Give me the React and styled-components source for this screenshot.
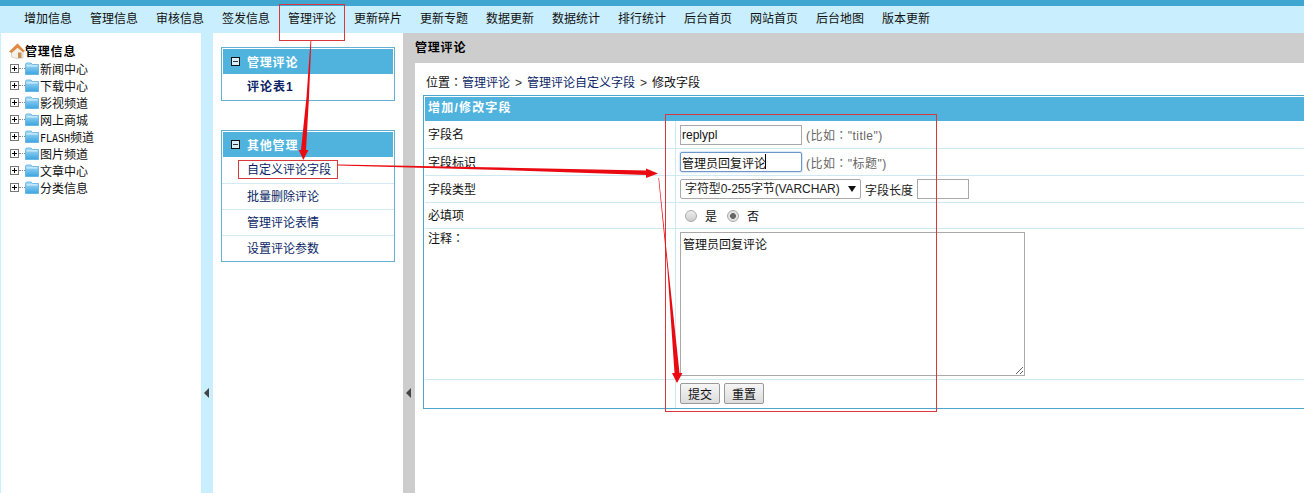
import styled, { createGlobalStyle } from "styled-components";

const FONT = `"Liberation Sans", "Noto Sans CJK SC", sans-serif`;

const navItems = ["增加信息", "管理信息", "审核信息", "签发信息", "管理评论", "更新碎片", "更新专题", "数据更新", "数据统计", "排行统计", "后台首页", "网站首页", "后台地图", "版本更新"];
const treeItems = ["新闻中心", "下载中心", "影视频道", "网上商城", "FLASH频道", "图片频道", "文章中心", "分类信息"];
const otherItems = ["自定义评论字段", "批量删除评论", "管理评论表情", "设置评论参数"];

const GlobalStyle = createGlobalStyle`
  html, body {
    margin: 0;
    padding: 0;
    height: 100%;
    overflow: hidden;
    background: #fff;
  }
  body {
    font-family: ${FONT};
    font-size: 12px;
    color: #111;
  }
`;

const Page = styled.div`
  position: relative;
  width: 1304px;
  height: 493px;
  overflow: hidden;
  display: flex;
  flex-direction: column;
`;

const TopStrip = styled.div`
  height: 6px;
  background: #3fa5d1;
`;

const Nav = styled.nav`
  height: 27px;
  padding-left: 15px;
  display: flex;
  align-items: center;
  background: #c9eefd;
`;

const NavItem = styled.a`
  width: 66px;
  text-align: center;
  font-size: 12px;
  line-height: 27px;
  color: #111;
`;

const Body = styled.div`
  flex: 1;
  display: flex;
  min-height: 0;
  background: #c9eefd;
`;

const Sidebar = styled.aside`
  width: 200px;
  margin-left: 1px;
  padding: 8px 0 0 8px;
  box-sizing: border-box;
  background: #fff;
`;

const Splitter = styled.div`
  width: 12px;
  flex: none;
  display: flex;
  align-items: flex-start;
  padding: 355px 0 0 3px;
  box-sizing: border-box;
  background: ${(p) => p.$bg};
  &::before {
    content: "";
    border-style: solid;
    border-width: 5px 5px 5px 0;
    border-color: transparent #444 transparent transparent;
  }
`;

const TreeRoot = styled.div`
  display: flex;
  align-items: center;
  height: 19px;
  font-weight: 700;
  font-size: 12px;
  letter-spacing: 0.8px;
  color: #000;
`;

const TreeList = styled.div`
  display: flex;
  flex-direction: column;
`;

const TreeRow = styled.div`
  display: flex;
  align-items: center;
  height: 17px;
  font-size: 12px;
  color: #111;
`;

const Plus = styled.span`
  position: relative;
  width: 7px;
  height: 7px;
  flex: none;
  margin-left: 1px;
  border: 1px solid #777;
  background: #fff;
  &::before {
    content: "";
    position: absolute;
    left: 1px;
    top: 3px;
    width: 5px;
    height: 1px;
    background: #000;
  }
  &::after {
    content: "";
    position: absolute;
    left: 3px;
    top: 1px;
    width: 1px;
    height: 5px;
    background: #000;
  }
`;

const Dots = styled.span`
  width: 6px;
  height: 0;
  flex: none;
  border-top: 1px dotted #888;
`;

const Mono = styled.span`
  font-family: "DejaVu Sans Mono", monospace;
  font-size: 10px;
`;

const Middle = styled.section`
  width: 190px;
  flex: none;
  padding: 14px 8px 0;
  box-sizing: border-box;
  background: #fff;
  display: flex;
  flex-direction: column;
  gap: 29px;
`;

const MenuBox = styled.div`
  border: 1px solid #62b0d2;
`;

const MenuHead = styled.div`
  height: 25px;
  margin: 1px 1px 0;
  padding-left: 8px;
  display: flex;
  align-items: center;
  gap: 7px;
  background: #4fb3de;
  color: #fff;
  font-weight: 700;
  font-size: 12px;
  letter-spacing: 0.8px;
`;

const MinusIcon = styled.span`
  position: relative;
  width: 7px;
  height: 7px;
  border: 1px solid #111;
  background: #d8eef8;
  &::after {
    content: "";
    position: absolute;
    left: 1px;
    top: 3px;
    width: 5px;
    height: 1px;
    background: #333;
  }
`;

const MenuRow = styled.a`
  display: block;
  height: 26px;
  line-height: 26px;
  padding-left: 25px;
  font-size: 12px;
  font-weight: ${(p) => (p.$bold ? 700 : 400)};
  letter-spacing: ${(p) => (p.$bold ? "1px" : "0")};
  color: #0b1f66;
  border-top: ${(p) => (p.$line ? "1px solid #d3eaf4" : "none")};
  box-sizing: border-box;
`;

const Main = styled.main`
  flex: 1;
  min-width: 0;
  margin-left: -12px;
  display: flex;
  flex-direction: column;
`;

const MainTitle = styled.div`
  height: 30px;
  line-height: 30px;
  padding-left: 12px;
  font-weight: 700;
  font-size: 12px;
  letter-spacing: 0.8px;
  color: #000;
  background: #cdcdcd;
`;

const Content = styled.div`
  flex: 1;
  margin-left: 12px;
  padding-left: 8px;
  background: #fff;
`;

const Crumb = styled.div`
  height: 32px;
  line-height: 38px;
  padding-left: 3px;
  font-size: 12px;
  color: #111;
  white-space: nowrap;
  a {
    color: #0b1f66;
  }
`;

const Sep = styled.span`
  margin: 0 5px;
  color: #333;
`;

// traditional-form colon sits in the middle of its cell, like the original
const Colon = styled.span`
  font-family: "Noto Sans CJK TC", sans-serif;
`;

const FormTable = styled.div`
  width: 1000px;
  border: 1px solid #4fa6cc;
  display: grid;
  grid-template-columns: 251px 1fr;
  padding: 1px 0 0 1px;
`;

const FormHead = styled.div`
  grid-column: 1 / -1;
  height: 24px;
  line-height: 23px;
  padding-left: 3px;
  background: #4fb3de;
  color: #fff;
  font-weight: 700;
  font-size: 12px;
  letter-spacing: 1.2px;
`;

const Label = styled.div`
  height: ${(p) => p.$h}px;
  padding: 0 0 ${(p) => (p.$top ? "0" : "2px")} 3px;
  box-sizing: border-box;
  display: flex;
  align-items: ${(p) => (p.$top ? "flex-start" : "center")};
  border-top: ${(p) => (p.$first ? "none" : "1px solid #cfe9f3")};
  border-right: 1px solid #cfe9f3;
  font-size: 12px;
  color: #111;
`;

const Field = styled.div`
  position: relative;
  height: ${(p) => p.$h}px;
  padding-left: 4px;
  box-sizing: border-box;
  display: flex;
  align-items: ${(p) => (p.$top ? "flex-start" : "center")};
  gap: 4px;
  border-top: ${(p) => (p.$first ? "none" : "1px solid #cfe9f3")};
  color: #555;
  font-size: 12px;
`;

const TextInput = styled.input`
  width: ${(p) => p.$w}px;
  height: 20px;
  box-sizing: border-box;
  padding: 0 1px;
  font-family: ${FONT};
  font-size: 12px;
  color: #111;
  background: #fff;
  outline: none;
  border-radius: ${(p) => (p.$focus ? "2px" : "0")};
  border: 1px solid ${(p) => (p.$focus ? "#6d97c9" : "#a9a9a9")};
  box-shadow: ${(p) => (p.$focus ? "0 0 2px #7ea8d8" : "none")};
`;

const Hint = styled.span`
  color: ${(p) => p.$color || "#666"};
  letter-spacing: ${(p) => (p.$color ? "0" : "0.45px")};
  white-space: nowrap;
`;

const Caret = styled.span`
  position: absolute;
  left: 89px;
  top: 5px;
  width: 1px;
  height: 15px;
  background: #000;
`;

const SelectWrap = styled.div`
  position: relative;
  width: 181px;
  height: 20px;
  &::after {
    content: "";
    position: absolute;
    right: 5px;
    top: 7px;
    border-style: solid;
    border-width: 6px 4px 0;
    border-color: #111 transparent transparent;
  }
`;

const Select = styled.select`
  appearance: none;
  width: 100%;
  height: 100%;
  padding: 0 0 0 4px;
  box-sizing: border-box;
  border: 1px solid #a9a9a9;
  border-radius: 2px;
  background: #fff;
  font-family: ${FONT};
  font-size: 12px;
  letter-spacing: -0.1px;
  color: #222;
`;

const RadioRow = styled.label`
  display: flex;
  align-items: center;
  gap: 8px;
  margin-left: 5px;
  margin-right: 1px;
  color: #111;
`;

const Radio = styled.input`
  appearance: none;
  width: 12px;
  height: 12px;
  margin: 0;
  border-radius: 50%;
  border: 1px solid #aaa;
  background: ${(p) => (p.$on ? "radial-gradient(circle, #666 0 2.6px, #e2e2e2 3.2px)" : "linear-gradient(#eee, #ccc)")};
`;

const Memo = styled.textarea`
  width: 345px;
  height: 144px;
  margin-top: 3px;
  padding: 2px;
  box-sizing: border-box;
  border: 1px solid #a9a9a9;
  font-family: ${FONT};
  font-size: 12px;
  color: #111;
  outline: none;
`;

const Btn = styled.button`
  width: 40px;
  height: 21px;
  margin-bottom: 2px;
  padding: 0;
  box-sizing: border-box;
  font-family: ${FONT};
  font-size: 12px;
  color: #111;
  border: 1px solid #999;
  border-radius: 2px;
  background: linear-gradient(#f6f6f6, #dcdcdc);
`;

const Overlay = styled.svg`
  position: absolute;
  left: 0;
  top: 0;
  pointer-events: none;
`;

const HouseIcon = () => (
  <svg width="16" height="16" viewBox="0 0 16 16" style={{ flex: "none" }}>
    <path d="M2.5 8.5 L8.5 3.5 L14 8 V15 L8 15.5 L2.5 14 Z" fill="#f4f1ea" stroke="#bfae92" strokeWidth=".5" />
    <path d="M0.5 8.5 L8.5 0.8 L15.5 8 L14 9 L8.5 4.4 L2.5 9.8 Z" fill="#e58a3c" stroke="#bd6a26" strokeWidth=".4" />
    <rect x="9" y="9.5" width="3.5" height="5.5" fill="#c98f52" />
  </svg>
);

const FolderIcon = () => (
  <svg width="14" height="13" viewBox="0 0 14 13" style={{ flex: "none", marginRight: 1 }}>
    <defs>
      <linearGradient id="fld" x1="0" y1="0" x2="0" y2="1">
        <stop offset="0" stopColor="#a8dcf5" />
        <stop offset="1" stopColor="#3ba4e0" />
      </linearGradient>
    </defs>
    <path d="M0.5 2.5 Q0.5 1 2 1 H6 L7.5 2.5 H13.5 V12.5 H0.5 Z" fill="url(#fld)" stroke="#5aaede" strokeWidth=".8" />
    <rect x="1.5" y="3.4" width="11" height="1" fill="#e6f6fd" />
  </svg>
);

const App = () => {
  return (
    <Page>
      <GlobalStyle />
      <TopStrip />
      <Nav>
        {navItems.map((n) => (
          <NavItem key={n}>{n}</NavItem>
        ))}
      </Nav>
      <Body>
        <Sidebar>
          <TreeRoot>
            <HouseIcon />
            管理信息
          </TreeRoot>
          <TreeList>
            {treeItems.map((t) => (
              <TreeRow key={t}>
                <Plus />
                <Dots />
                <FolderIcon />
                {t.startsWith("FLASH") ? (
                  <span>
                    <Mono>FLASH</Mono>频道
                  </span>
                ) : (
                  t
                )}
              </TreeRow>
            ))}
          </TreeList>
        </Sidebar>
        <Splitter $bg="#c9eefd" />
        <Middle>
          <MenuBox>
            <MenuHead>
              <MinusIcon />
              管理评论
            </MenuHead>
            <MenuRow $bold>评论表1</MenuRow>
          </MenuBox>
          <MenuBox>
            <MenuHead>
              <MinusIcon />
              其他管理
            </MenuHead>
            {otherItems.map((o, i) => (
              <MenuRow key={o} $line={i > 0}>
                {o}
              </MenuRow>
            ))}
          </MenuBox>
        </Middle>
        <Splitter $bg="#cdcdcd" />
        <Main>
          <MainTitle>管理评论</MainTitle>
          <Content>
            <Crumb>
              位置<Colon>：</Colon>
              <a>管理评论</a>
              <Sep>&gt;</Sep>
              <a>管理评论自定义字段</a>
              <Sep>&gt;</Sep>
              修改字段
            </Crumb>
            <FormTable>
              <FormHead>增加/修改字段</FormHead>
              <Label $h={27} $first>字段名</Label>
              <Field $h={27} $first>
                <TextInput $w={122} defaultValue="replypl" />
                <Hint>
                  (比如<Colon>：</Colon>"title")
                </Hint>
              </Field>
              <Label $h={27}>字段标识</Label>
              <Field $h={27}>
                <TextInput $w={122} $focus defaultValue="管理员回复评论" />
                <Caret />
                <Hint>
                  (比如<Colon>：</Colon>"标题")
                </Hint>
              </Field>
              <Label $h={27}>字段类型</Label>
              <Field $h={27}>
                <SelectWrap>
                  <Select defaultValue="v">
                    <option value="v">字符型0-255字节(VARCHAR)</option>
                  </Select>
                </SelectWrap>
                <Hint $color="#222">字段长度</Hint>
                <TextInput $w={52} />
              </Field>
              <Label $h={26}>必填项</Label>
              <Field $h={26}>
                <RadioRow>
                  <Radio type="radio" name="req" />是
                </RadioRow>
                <RadioRow>
                  <Radio type="radio" name="req" $on />否
                </RadioRow>
              </Field>
              <Label $h={151} $top>
                注释<Colon>：</Colon>
              </Label>
              <Field $h={151} $top>
                <Memo defaultValue="管理员回复评论" />
              </Field>
              <Label $h={29} />
              <Field $h={29}>
                <Btn>提交</Btn>
                <Btn>重置</Btn>
              </Field>
            </FormTable>
          </Content>
        </Main>
      </Body>
      <Overlay width="1304" height="493" viewBox="0 0 1304 493">
        <g fill="none" stroke="#d8383c" strokeWidth="1">
          <rect x="279.5" y="4.5" width="65" height="36" />
          <rect x="238.5" y="160.5" width="99" height="18" />
          <rect x="665.5" y="114.5" width="271" height="297" />
        </g>
        <g fill="#ea0a12">
          <path d="M310.5 41 L311.3 41 L309 97 L306 150 L308.5 150 L303.3 160 L298.8 150 L301 150 L306.5 97 Z" />
          <path d="M338 164.6 L500 167.6 L646 170.6 L646 168.5 L658 173.5 L646 178 L646 175 L500 170 L338 165.6 Z" />
          <path d="M658.4 178 L659 178 L668.5 270 L679.5 373 L682.5 373 L677 383 L672 373 L674.5 373 L667.5 270 Z" />
        </g>
      </Overlay>
    </Page>
  );
};

export default App;
